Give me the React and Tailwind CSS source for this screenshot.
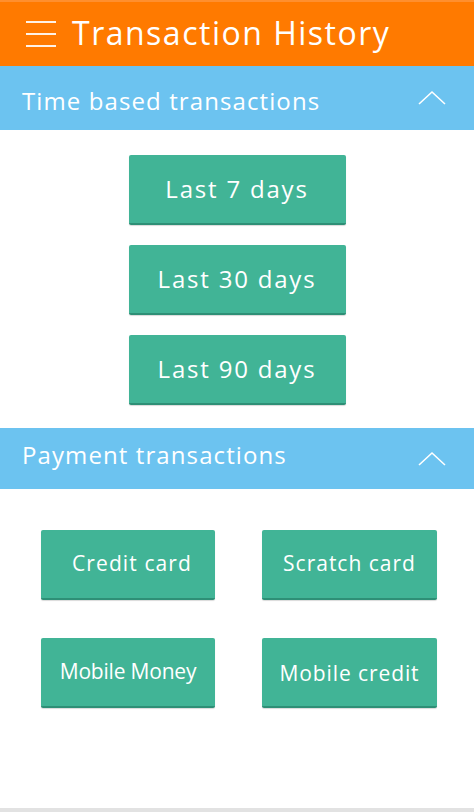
import { useState } from "react";

function Chevron() {
  return (
    <svg width="28" height="16" viewBox="0 0 28 16" fill="none">
      <path d="M1 14 L14 2 L27 14" stroke="white" strokeWidth="1.6" />
    </svg>
  );
}

function SectionBar({ title, className, textClass }) {
  return (
    <div className={`flex items-center justify-between bg-[#6cc3f0] pl-[22px] pr-[28px] ${className}`}>
      <span className={`text-[24px] text-white tracking-[1.1px] ${textClass}`}>{title}</span>
      <Chevron />
    </div>
  );
}

function Btn({ label, className }) {
  return (
    <button className={`flex items-center justify-center bg-[#41b496] border-b-2 border-[#2e8f76] rounded-[2px] text-white shadow-[0_1px_1px_rgba(0,0,0,0.15)] ${className}`}>
      {label}
    </button>
  );
}

export default function App() {
  const [open] = useState(true);
  const times = ["Last 7 days", "Last 30 days", "Last 90 days"];
  const payments = [
    { label: "Credit card", cls: "tracking-[1.1px] pl-[8px]" },
    { label: "Scratch card", cls: "tracking-[1px]" },
    { label: "Mobile Money", cls: "tracking-[-0.2px]" },
    { label: "Mobile credit", cls: "tracking-[0.9px] pt-[4px]" },
  ];

  return (
    <div className="w-[474px] h-[812px] bg-white flex flex-col font-['Open_Sans',sans-serif]">
      {/* header */}
      <div className="h-[66px] bg-[#ff7a00] border-t-2 border-[#ff8f2e] flex items-center pl-[26px]">
        <div className="flex flex-col gap-[10px] w-[30px]">
          <span className="h-[2px] bg-white/90" />
          <span className="h-[2px] bg-white/90" />
          <span className="h-[2px] bg-white/90" />
        </div>
        <h1 className="ml-[16px] text-[32px] text-white leading-none pb-[2px] tracking-[1.5px]">Transaction History</h1>
      </div>

      <SectionBar title="Time based transactions" className="h-[64px]" textClass="pt-[5px]" />

      {open && (
        <div className="flex flex-col items-center pt-[25px] gap-[20px] pb-[23px]">
          {times.map((t) => (
            <Btn key={t} label={t} className="w-[217px] h-[70px] text-[24px] tracking-[1.8px]" />
          ))}
        </div>
      )}

      <SectionBar title="Payment transactions" className="h-[61px]" textClass="pb-[7px]" />

      <div className="grid grid-cols-[174px_175px] gap-x-[47px] gap-y-[38px] pl-[41px] pt-[41px]">
        {payments.map((p) => (
          <Btn key={p.label} label={p.label} className={`h-[70px] text-[21px] ${p.cls}`} />
        ))}
      </div>

      <div className="flex-1" />
      <div className="h-[4px] bg-[#e2e2e2]" />
    </div>
  );
}
